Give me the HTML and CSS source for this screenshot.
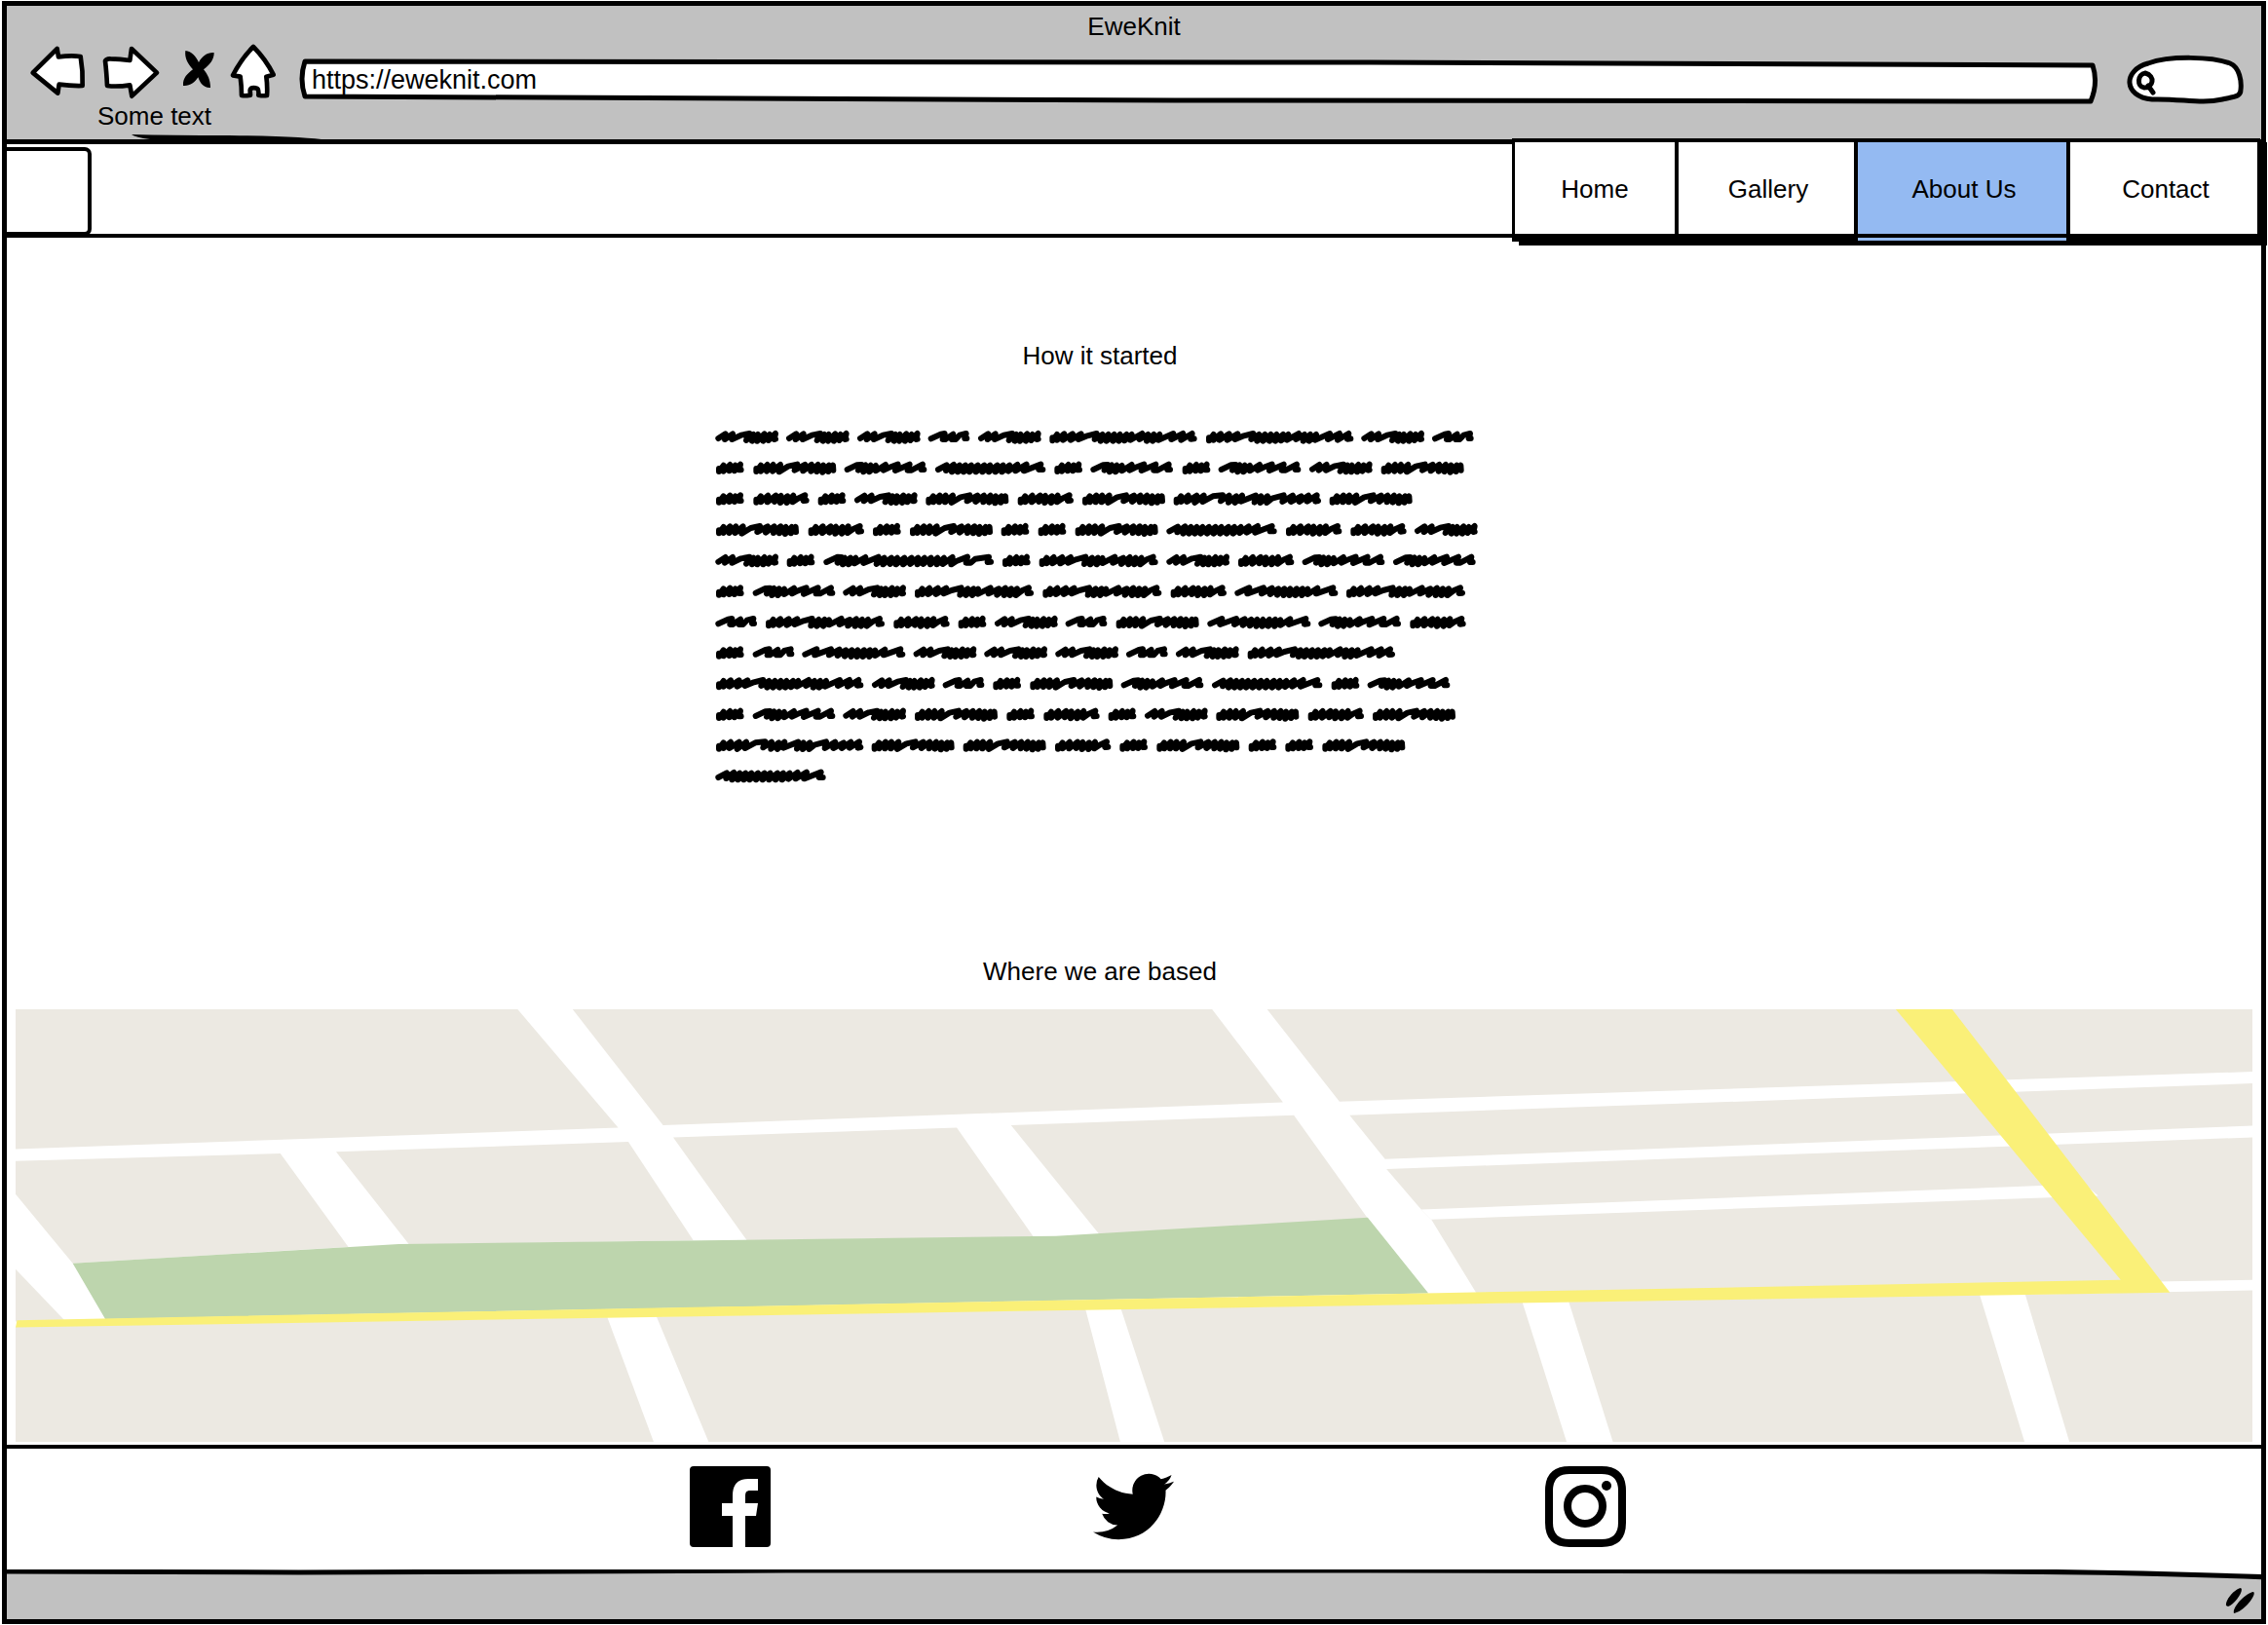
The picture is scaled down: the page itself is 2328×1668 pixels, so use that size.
FILE: index.html
```html
<!DOCTYPE html>
<html lang="en">
<head>
<meta charset="utf-8">
<meta name="viewport" content="width=device-width, initial-scale=1">
<title>EweKnit</title>
<link rel="stylesheet" href="styles.css">
</head>
<body>
<div class="browser">
  <header class="chrome">
    <div class="chrome-title">EweKnit</div>
    <div class="toolbar">
      <button class="tool" type="button" aria-label="Back">
        <svg viewBox="30 48 192 180"><path class="sketch" d="M41 134L116 60L120 85Q160 80 188 84Q196 130 194 174Q160 175 122 170L118 197Z"/></svg>
      </button>
      <button class="tool" type="button" aria-label="Forward">
        <svg viewBox="237 48 192 180"><path class="sketch" d="M423 134L346 206L340 172Q300 178 270 174Q268 130 264 98Q268 90 280 91Q310 92 340 96L345 60Z"/></svg>
      </button>
      <button class="tool" type="button" aria-label="Stop">
        <svg viewBox="444 48 192 180"><path class="ink" d="M511 66C530 68 544 84 552 102C562 82 580 70 599 72C600 92 586 110 567 124C580 140 588 156 588 180C568 182 556 166 550 148C540 164 524 176 504 174C502 150 518 136 534 124C518 106 508 88 511 66Z"/></svg>
      </button>
      <button class="tool" type="button" aria-label="Home">
        <svg viewBox="651 48 192 180"><path class="sketch" d="M720 54Q758 92 782 140L760 146Q764 176 762 204Q750 206 736 203Q738 182 728 181Q712 178 710 188L711 203Q696 206 684 204Q684 176 680 146L657 142Q684 90 720 54Z"/></svg>
      </button>
      <label class="field address">
        <svg class="outline" viewBox="0 0 1848 48" preserveAspectRatio="none"><path class="line" d="M7 4L1100 5L1843 8Q1849 26 1841 45L900 44L7 40Q1 22 7 4Z"/></svg>
        <input class="address-input" type="text" value="https://eweknit.com" aria-label="Address">
      </label>
      <label class="field search">
        <svg class="outline" viewBox="2181 55 124 56"><path class="line" d="M2208 102C2178 99 2178 72 2204 65C2226 57 2270 58 2288 65C2298 69 2300 84 2299 92C2299 99 2294 99 2280 102C2258 107 2238 101 2208 102Z"/><path class="glass" d="M2201 75C2193 76 2192 89 2200 90C2209 90 2212 78 2201 75ZM2204 88L2209 95"/></svg>
        <input class="search-input" type="text" aria-label="Search">
      </label>
    </div>
    <div class="bookmark">Some text</div>
    <svg class="swoosh" viewBox="0 0 200 8"><path class="ink" d="M0 0Q40 1 100 1Q180 2 200 6V8H60Q8 6 0 0Z"/></svg>
  </header>

  <div class="site-header">
    <a class="logo" href="#" aria-label="EweKnit"></a>
    <nav class="menu">
      <a class="menu-item" href="#">Home</a>
      <a class="menu-item" href="#">Gallery</a>
      <a class="menu-item active" href="#" aria-current="page">About Us</a>
      <a class="menu-item" href="#">Contact</a>
    </nav>
  </div>

  <main class="content">
    <section class="story">
      <h2 class="heading">How it started</h2>
      <svg class="scribble" viewBox="41 0 2352 1086" aria-hidden="true">
        <defs>
          <path id="a" d="M8 24L30 10L28 27L52 10L50 27L78 14L104 9L94 30L116 12L112 32L130 12L128 32L150 10L146 32L166 12L162 30L184 9L180 27L184 26"/>
          <path id="b" d="M8 25L38 11L50 9L44 27L52 27L76 11L72 27L84 27L96 14L116 9L112 24L118 24"/>
          <path id="c" d="M10 22L10 31L24 12L24 30L44 10L42 29L60 12L58 29L76 9L72 26L78 26"/>
          <path id="d" d="M10 22L10 31L24 12L24 30L44 10L42 30L62 10L60 30L84 10L80 32L108 15L136 9L128 27L160 10L154 29L180 10L178 30L200 10L196 31L216 12L214 33L234 12L232 31L246 12L247 27"/>
          <path id="e" d="M8 25L38 11L52 10L42 27L64 11L58 32L80 12L76 32L96 13L96 29L126 10L120 27L136 19L164 9L156 28L200 9L194 27L206 27L240 9L236 25L244 25"/>
          <path id="f" d="M8 25L34 11L32 28L56 10L50 32L74 12L68 32L92 12L86 32L110 12L104 32L130 12L124 32L150 12L144 32L168 12L164 32L190 12L184 32L208 12L204 32L228 12L224 30L252 10L246 29L280 9L272 29L324 9L318 25L330 25"/>
          <path id="g" d="M10 22L10 31L24 12L24 30L46 10L44 30L70 10L66 29L86 11L84 32L106 12L104 32L124 10L122 30L138 19L160 9L155 26L164 25"/>
          <path id="h" d="M10 22L10 31L24 12L24 29L46 10L42 29L72 10L66 29L98 10L90 27L114 17L146 9L140 27L164 12L158 32L182 12L176 32L200 12L196 32L218 12L214 32L238 12L232 31L254 12L250 29L286 9L278 27L304 12L300 32L322 12L318 32L340 12L336 29L382 9L376 27L412 9L406 29L440 9L436 26L446 25"/>
          <path id="i" d="M10 22L10 31L24 12L24 29L46 10L42 29L72 10L66 32L94 10L90 29L122 12L152 9L146 27L172 10L170 31L194 12L190 32L212 10L208 28L254 10L250 31L270 12L268 32L290 12L288 32L304 19L340 9L336 29L368 10L362 29L394 12L388 29L416 10L412 28L442 9L438 28L446 26"/>
          <path id="j" d="M8 25L42 9L54 10L42 27L64 12L58 32L82 12L76 32L98 12L94 29L128 10L122 28L168 9L162 31L186 12L182 32L208 12L204 31L226 12L222 32L248 12L244 32L270 12L266 31L290 12L288 32L310 12L306 31L330 12L328 32L350 12L348 32L370 12L366 31L396 10L392 32L408 22L442 9L438 27L452 27L466 15L508 9L504 25L514 24"/>
          <path id="k" d="M10 22L10 31L24 12L24 29L46 10L42 29L72 10L66 29L98 10L90 27L114 17L144 9L140 31L164 12L158 32L182 12L178 32L196 13L196 28L234 9L228 27L260 12L254 31L280 10L276 32L298 12L294 32L316 12L312 32L332 17L352 9L348 26L358 25"/>
          <path id="l" d="M8 25L44 9L38 27L88 9L82 27L114 10L108 29L134 12L130 31L152 12L150 32L170 12L168 32L190 12L186 32L208 12L206 32L224 13L224 29L254 10L250 27L302 9L298 26L308 25"/>
        </defs>
        <g transform="translate(0 3)"><use href="#a" x="43"/><use href="#a" x="261"/><use href="#a" x="480"/><use href="#b" x="698"/><use href="#a" x="852"/><use href="#h" x="1070"/><use href="#h" x="1552"/><use href="#a" x="2032"/><use href="#b" x="2250"/></g>
        <g transform="translate(0 98)"><use href="#c" x="43"/><use href="#d" x="158"/><use href="#e" x="440"/><use href="#f" x="720"/><use href="#c" x="1085"/><use href="#e" x="1198"/><use href="#c" x="1479"/><use href="#e" x="1592"/><use href="#a" x="1872"/><use href="#d" x="2091"/></g>
        <g transform="translate(0 193)"><use href="#c" x="43"/><use href="#g" x="158"/><use href="#c" x="357"/><use href="#a" x="471"/><use href="#d" x="689"/><use href="#g" x="972"/><use href="#d" x="1171"/><use href="#i" x="1452"/><use href="#d" x="1932"/></g>
        <g transform="translate(0 288)"><use href="#d" x="43"/><use href="#g" x="327"/><use href="#c" x="526"/><use href="#d" x="640"/><use href="#c" x="921"/><use href="#c" x="1035"/><use href="#d" x="1149"/><use href="#f" x="1432"/><use href="#g" x="1798"/><use href="#g" x="1997"/><use href="#a" x="2196"/></g>
        <g transform="translate(0 383)"><use href="#a" x="43"/><use href="#c" x="261"/><use href="#j" x="376"/><use href="#c" x="925"/><use href="#k" x="1038"/><use href="#a" x="1432"/><use href="#g" x="1651"/><use href="#e" x="1850"/><use href="#e" x="2130"/></g>
        <g transform="translate(0 478)"><use href="#c" x="43"/><use href="#e" x="158"/><use href="#a" x="436"/><use href="#k" x="655"/><use href="#k" x="1049"/><use href="#g" x="1443"/><use href="#l" x="1642"/><use href="#k" x="1984"/></g>
        <g transform="translate(0 573)"><use href="#b" x="43"/><use href="#k" x="196"/><use href="#g" x="590"/><use href="#c" x="789"/><use href="#a" x="903"/><use href="#b" x="1121"/><use href="#d" x="1275"/><use href="#l" x="1558"/><use href="#e" x="1900"/><use href="#g" x="2180"/></g>
        <g transform="translate(0 667)"><use href="#c" x="43"/><use href="#b" x="158"/><use href="#l" x="310"/><use href="#a" x="653"/><use href="#a" x="871"/><use href="#a" x="1090"/><use href="#b" x="1308"/><use href="#a" x="1461"/><use href="#h" x="1680"/></g>
        <g transform="translate(0 762)"><use href="#h" x="43"/><use href="#a" x="525"/><use href="#b" x="743"/><use href="#c" x="896"/><use href="#d" x="1010"/><use href="#e" x="1292"/><use href="#f" x="1572"/><use href="#c" x="1938"/><use href="#e" x="2051"/></g>
        <g transform="translate(0 857)"><use href="#c" x="43"/><use href="#e" x="158"/><use href="#a" x="436"/><use href="#d" x="655"/><use href="#c" x="938"/><use href="#g" x="1052"/><use href="#c" x="1251"/><use href="#a" x="1365"/><use href="#d" x="1583"/><use href="#g" x="1866"/><use href="#d" x="2065"/></g>
        <g transform="translate(0 952)"><use href="#i" x="43"/><use href="#d" x="522"/><use href="#d" x="804"/><use href="#g" x="1087"/><use href="#c" x="1286"/><use href="#d" x="1400"/><use href="#c" x="1683"/><use href="#c" x="1796"/><use href="#d" x="1910"/></g>
        <g transform="translate(0 1046)"><use href="#f" x="43"/></g>
      </svg>
    </section>

    <section class="location">
      <h2 class="heading">Where we are based</h2>
      <svg class="map" viewBox="22 39 3092 1074" preserveAspectRatio="none" role="img" aria-label="Map">
        <g class="blocks">
          <path d="M22 39H716L855 333L22 386Z"/>
          <path d="M792 39H1676L1774 270L917 327Z"/>
          <path d="M1752 39H3114V194L1852 268Z"/>
          <path d="M22 416L388 397L482 629L101 670L22 498Z"/>
          <path d="M465 393L869 368L959 613L566 623Z"/>
          <path d="M931 357L1323 333L1429 604L1033 613Z"/>
          <path d="M1398 327L1789 302L1891 558L1520 598Z"/>
          <path d="M1866 302L3114 223V328L1915 411Z"/>
          <path d="M1917 436L3114 357V711L2041 743L1979 561L1965 536Z"/>
          <path d="M22 684L89 810L22 814Z"/>
          <path d="M22 827L840 804L904 1113H22Z"/>
          <path d="M908 802L1501 784L1549 1113H980Z"/>
          <path d="M1550 783L2105 767L2166 1113H1610Z"/>
          <path d="M2169 765L2737 748L2799 1113H2230Z"/>
          <path d="M2800 747L3114 737V1113H2861Z"/>
        </g>
        <path class="road" d="M1965 536L2822 477L2888 482L2901 502L1979 561Z"/>
        <path class="park" d="M101 670L552 622L1460 602L1891 556L1975 744L146 808Z"/>
        <path class="highway" d="M24 811L2932 711L2621 39H2699L3000 742L22 829Z"/>
      </svg>
    </section>
  </main>

  <footer class="social">
    <a class="social-link" href="#" aria-label="Facebook">
      <svg viewBox="0 0 83 83"><path class="ink" fill-rule="evenodd" d="M4 0H79Q83 0 83 4V79Q83 83 79 83H57V51H68L70 38H57V31C57 27 58 25 62 25H70V13H60C50 13 44 18 44 30V38H33V51H44V83H4Q0 83 0 79V4Q0 0 4 0Z"/></svg>
    </a>
    <a class="social-link twitter" href="#" aria-label="Twitter">
      <svg viewBox="0 0 24 24"><path class="ink" d="M23.953 4.57a10 10 0 01-2.825.775 4.958 4.958 0 002.163-2.723c-.951.555-2.005.959-3.127 1.184a4.92 4.92 0 00-8.384 4.482C7.69 8.095 4.067 6.13 1.64 3.162a4.822 4.822 0 00-.666 2.475c0 1.71.87 3.213 2.188 4.096a4.904 4.904 0 01-2.228-.616v.06a4.923 4.923 0 003.946 4.827 4.996 4.996 0 01-2.212.085 4.936 4.936 0 004.604 3.417 9.867 9.867 0 01-6.102 2.105c-.39 0-.779-.023-1.17-.067a13.995 13.995 0 007.557 2.209c9.053 0 13.998-7.496 13.998-13.985 0-.21 0-.42-.015-.63A9.935 9.935 0 0024 4.59z"/></svg>
    </a>
    <a class="social-link" href="#" aria-label="Instagram">
      <svg viewBox="0 0 83 83"><path class="ring" d="M25 4H58Q79 4 79 25V58Q79 79 58 79H25Q4 79 4 58V25Q4 4 25 4Z"/><circle class="ring" cx="41" cy="41" r="18"/><circle class="ink" cx="63" cy="20" r="5"/></svg>
    </a>
  </footer>

  <div class="statusbar">
    <svg class="edge" viewBox="0 0 2314 12" preserveAspectRatio="none"><path class="line" d="M-10 -10H2324V8Q2140 1 1954 2L1400 1H800L300 3L-10 2Z"/></svg>
    <svg class="grip" viewBox="0 0 32 26"><path class="ink" d="M1 18C0 12 10 1 16 0C20 2 10 17 3 19ZM9 26C7 20 21 5 29 4C33 6 20 24 9 26Z"/></svg>
  </div>
</div>
</body>
</html>
```
FILE: styles.css
```css
* {
  box-sizing: border-box;
}

body {
  margin: 0;
  background: #fff;
  color: #000;
  font-family: "Liberation Sans", Arial, sans-serif;
  font-size: 26px;
  line-height: 30px;
}

a {
  color: inherit;
  text-decoration: none;
}

svg {
  display: block;
  overflow: visible;
}

.browser {
  display: flex;
  flex-direction: column;
  min-height: calc(100vh - 2px);
  margin: 1px 2px;
  border: 5px solid #000;
}

/* Shared drawing styles */
.ink {
  fill: #000;
}

.sketch,
.line {
  fill: #fff;
  stroke: #000;
  stroke-linejoin: round;
}

.sketch {
  stroke-width: 14px;
}

.line {
  stroke-width: 5px;
  vector-effect: non-scaling-stroke;
}

.glass {
  fill: none;
  stroke: #000;
  stroke-width: 5px;
  stroke-linecap: round;
}

.ring {
  fill: none;
  stroke: #000;
  stroke-width: 8px;
}

/* Browser chrome */
.chrome {
  position: relative;
  height: 142px;
  border-bottom: 5px solid #000;
  background: #c1c1c1;
}

.chrome-title {
  height: 40px;
  line-height: 42px;
  text-align: center;
}

.toolbar {
  display: flex;
  align-items: center;
  gap: 5px;
  height: 60px;
  padding: 0 15px 0 23px;
}

.tool {
  flex: none;
  width: 64px;
  height: 60px;
  padding: 0;
  border: 0;
  background: none;
}

.tool svg {
  width: 64px;
  height: 60px;
}

.field {
  position: relative;
  display: block;
}

.field input {
  position: relative;
  display: block;
  width: 100%;
  height: 100%;
  border: 0;
  background: none;
  color: inherit;
  font: inherit;
  outline: none;
}

.outline {
  position: absolute;
  inset: 0;
  width: 100%;
  height: 100%;
}

.address {
  flex: 1;
  height: 48px;
  margin: 14px 24px 0 0;
}

.address .address-input {
  padding: 0 14px 2px;
  font-size: 27px;
}

.search {
  flex: none;
  width: 124px;
  height: 56px;
  margin-top: 14px;
}

.search .search-input {
  padding: 0 16px 0 36px;
}

.bookmark {
  padding-left: 93px;
  line-height: 26px;
}

.swoosh {
  position: absolute;
  left: 128px;
  bottom: -3px;
  width: 200px;
  height: 8px;
}

/* Site header */
.site-header {
  position: relative;
  display: flex;
  justify-content: space-between;
  height: 96px;
}

.site-header::after {
  content: "";
  position: absolute;
  right: 0;
  bottom: 0;
  left: 0;
  height: 4px;
  background: #000;
}

.logo {
  width: 87px;
  height: 91px;
  margin-top: 3px;
  border: 4px solid #000;
  border-left: 0;
  border-radius: 0 7px 7px 0;
}

.menu {
  display: grid;
  grid-template-columns: 164fr 184fr 218fr 196fr;
  width: 768px;
  height: 106px;
  margin: -6px 1px 0 0;
  border: 4px solid #000;
  border-left-width: 3px;
  border-right-width: 3px;
  background: #fff;
  box-shadow: 7px 4px 0 #000;
  clip-path: polygon(0 0, 100% 0, 100% 4px, 120% 4px, 120% 120%, 7px 120%, 7px 100%, 0 100%);
}

.menu-item {
  padding: 0 0 4px 4px;
  border-left: 4px solid #000;
  line-height: 97px;
  text-align: center;
}

.menu-item:first-child {
  padding-left: 0;
  border-left: 0;
}

.menu-item.active {
  background: #94baf2;
}

/* Page content */
.content {
  flex: 1;
  padding: 106px 9px 3px;
}

.heading {
  margin: 0;
  padding-right: 70px;
  font-size: 26px;
  font-weight: 400;
  line-height: 30px;
  text-align: center;
}

.scribble {
  position: relative;
  right: 38px;
  width: 784px;
  height: 362px;
  margin: 61px auto 0;
  fill: none;
  stroke: #000;
  stroke-width: 18px;
  stroke-linecap: round;
  stroke-linejoin: round;
}

.location {
  margin-top: 179px;
}

.map {
  width: 100%;
  height: 444px;
  margin-top: 24px;
}

.blocks {
  fill: #ece9e2;
}

.road {
  fill: #fff;
}

.park {
  fill: #bdd5ad;
}

.highway {
  fill: #faf078;
}

/* Social links */
.social {
  display: flex;
  justify-content: center;
  gap: 331px;
  padding: 18px 0 23px 48px;
  border-top: 4px solid #000;
}

.social-link,
.social-link svg {
  width: 83px;
  height: 83px;
}

.twitter {
  margin-right: 50px;
}

/* Status bar */
.statusbar {
  position: relative;
  display: flex;
  justify-content: flex-end;
  align-items: flex-end;
  height: 51px;
  padding: 0 5px 6px 0;
  background: #c1c1c1;
}

.edge {
  position: absolute;
  top: 0;
  left: 0;
  width: 100%;
  height: 12px;
  overflow: hidden;
}

.grip {
  width: 32px;
  height: 26px;
}
```
